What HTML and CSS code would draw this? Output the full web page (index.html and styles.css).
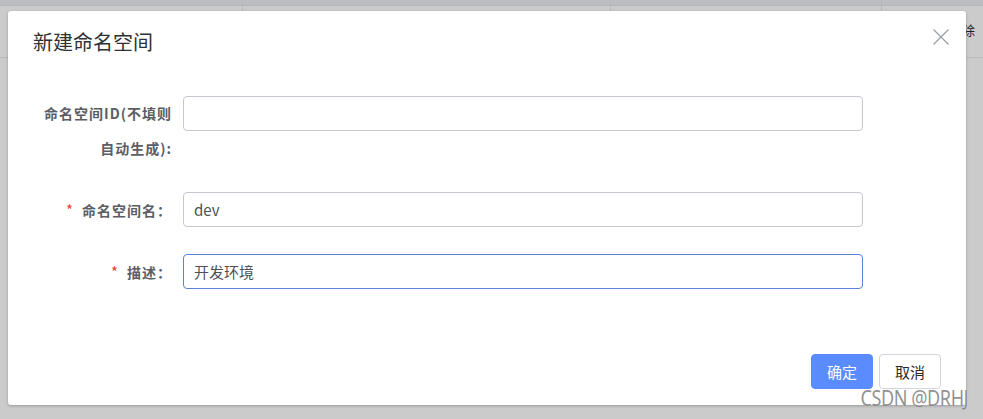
FILE: index.html
```html
<!DOCTYPE html>
<html lang="zh-CN">
<head>
<meta charset="utf-8">
<title>新建命名空间</title>
<link rel="stylesheet" href="styles.css">
</head>
<body>
<div class="page">
  <div class="table-bg">
    <div class="row-top">
      <div class="cell c1"></div>
      <div class="cell c2"></div>
      <div class="cell c3"></div>
      <div class="cell c4"></div>
    </div>
    <div class="row-main">
      <div class="cell c1"></div>
      <div class="cell c2"></div>
      <div class="cell c3"></div>
      <div class="cell c4"><span class="op">删除</span></div>
    </div>
  </div>

  <div class="dialog">
    <div class="dialog-header">
      <span class="dialog-title">新建命名空间</span>
    </div>
    <button class="dialog-close" aria-label="关闭">
      <svg width="16" height="16" viewBox="0 0 16 16"><path d="M0.5 0.5 L15.5 15.5 M15.5 0.5 L0.5 15.5" stroke="#9a9ea6" stroke-width="1.3" fill="none"/></svg>
    </button>
    <form class="form">
      <div class="form-item">
        <label class="form-label">命名空间ID(不填则<br>自动生成):</label>
        <div class="form-control"><input class="input" type="text" value=""></div>
      </div>
      <div class="form-item">
        <label class="form-label"><span class="req">*</span>命名空间名：</label>
        <div class="form-control"><input class="input" type="text" value="dev"></div>
      </div>
      <div class="form-item">
        <label class="form-label"><span class="req">*</span>描述：</label>
        <div class="form-control"><input class="input focus" type="text" value="开发环境"></div>
      </div>
    </form>
    <div class="dialog-footer">
      <button class="btn btn-primary" type="button">确定</button>
      <button class="btn btn-default" type="button">取消</button>
    </div>
  </div>

  <div class="watermark">CSDN @DRHJ</div>
</div>
</body>
</html>
```

FILE: styles.css
```css
* { box-sizing: border-box; }

html, body {
  margin: 0;
  padding: 0;
  width: 983px;
  height: 419px;
  overflow: hidden;
  background: #cbcbcb;
  font-family: "Noto Sans CJK SC", "Noto Sans", sans-serif;
}

.page {
  position: relative;
  width: 983px;
  height: 419px;
}

.table-bg {
  display: flex;
  flex-direction: column;
}

.row-top, .row-main {
  display: flex;
}

.row-top {
  height: 6px;
  background: #bdbec2;
  border-bottom: 1px solid #b6b7bb;
}

.row-main {
  height: 52px;
  border-bottom: 1px solid #b9babd;
}

.cell {
  border-right: 1px solid #b8b9bd;
}
.c1 { width: 243px; }
.c2 { width: 368px; }
.c3 { width: 271px; }
.c4 { flex: 1; border-right: none; }

.row-main .c4 {
  display: flex;
  align-items: center;
  padding-left: 67px;
  padding-bottom: 4px;
}

.op {
  font-size: 13px;
  color: #1f1f1f;
}

.dialog {
  position: absolute;
  left: 8px;
  top: 11px;
  width: 958px;
  height: 394px;
  background: #fff;
  border-radius: 3px;
  box-shadow: 0 1px 3px rgba(0, 0, 0, 0.25);
  display: flex;
  flex-direction: column;
}

.dialog-header {
  padding: 19px 25px 0;
  height: 85px;
}

.dialog-title {
  font-size: 20px;
  line-height: 24px;
  color: #303133;
}

.dialog-close {
  position: absolute;
  top: 18px;
  right: 17px;
  width: 16px;
  height: 16px;
  padding: 0;
  border: none;
  background: none;
  display: flex;
}

.form {
  margin: 0;
  padding-left: 20px;
  display: flex;
  flex-direction: column;
  gap: 26px;
}

.form-item {
  display: flex;
  align-items: flex-start;
}

.form-label {
  width: 155px;
  padding-right: 11px;
  text-align: right;
  font-size: 14px;
  font-weight: bold;
  letter-spacing: 1px;
  line-height: 35px;
  color: #5c5e64;
}

.req {
  color: #f0402f;
  font-size: 15px;
  font-weight: normal;
  margin-right: 8px;
}

.form-control {
  width: 680px;
}

.input {
  display: block;
  width: 100%;
  height: 35px;
  border: 1px solid #c6c8cf;
  border-radius: 4px;
  padding: 0 10px;
  font-family: "Noto Sans CJK SC", "Noto Sans", sans-serif;
  font-size: 15px;
  color: #4e5058;
  background: #fff;
  outline: none;
}

.input.focus {
  border-color: #5a82d8;
}

.dialog-footer {
  margin-top: auto;
  display: flex;
  justify-content: flex-end;
  gap: 6px;
  padding: 0 25px 16px 0;
}

.btn {
  width: 62px;
  height: 35px;
  border-radius: 4px;
  font-family: "Noto Sans CJK SC", "Noto Sans", sans-serif;
  font-size: 15px;
  padding: 0;
}

.btn-primary {
  background: #5a8bff;
  border: 1px solid #5a8bff;
  color: #fff;
}

.btn-default {
  background: #fff;
  border: 1px solid #d4d5dc;
  color: #2b2b2b;
}

.watermark {
  position: absolute;
  right: 15px;
  top: 385px;
  font-family: "Noto Sans", "DejaVu Sans", sans-serif;
  font-size: 21px;
  line-height: 26px;
  letter-spacing: -0.5px;
  white-space: nowrap;
  transform: scaleX(0.86);
  transform-origin: right center;
  color: rgba(125, 125, 125, 0.85);
  text-shadow: 0 0 1px rgba(255, 255, 255, 0.8);
}
```
